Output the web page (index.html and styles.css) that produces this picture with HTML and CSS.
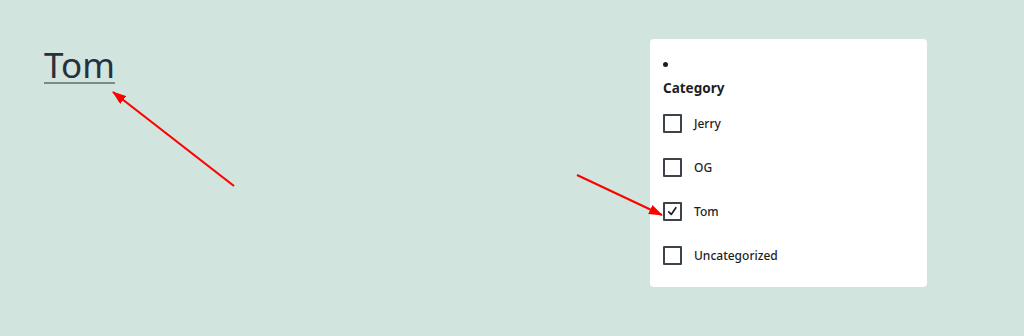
FILE: index.html
```html
<!DOCTYPE html>
<html>
<head>
<meta charset="utf-8">
<link rel="stylesheet" href="styles.css">
</head>
<body>
<div class="page">
  <div class="main">
    <a class="title" href="#">Tom</a>
  </div>
  <aside class="panel">
    <ul class="bullets"><li></li></ul>
    <h3 class="heading">Category</h3>
    <ul class="cats">
      <li class="cat"><span class="box"></span><span class="label">Jerry</span></li>
      <li class="cat"><span class="box"></span><span class="label">OG</span></li>
      <li class="cat"><span class="box checked"><svg viewBox="0 0 18 18" width="18" height="18"><path d="M4.5 9.5 L7.5 12.5 L13 4.5" fill="none" stroke="#1e1e1e" stroke-width="2" stroke-linecap="round" stroke-linejoin="round"/></svg></span><span class="label">Tom</span></li>
      <li class="cat"><span class="box"></span><span class="label">Uncategorized</span></li>
    </ul>
  </aside>
</div>
<svg class="arrows" width="1024" height="336" viewBox="0 0 1024 336">
  <defs>
    <marker id="head2" markerWidth="14" markerHeight="10" refX="13" refY="5" orient="auto" markerUnits="userSpaceOnUse">
      <path d="M0 0 L14 5 L0 10 Z" fill="#ff0000"/>
    </marker>
  </defs>
  <line x1="234" y1="186" x2="113" y2="92" stroke="#ff0000" stroke-width="2.2" marker-end="url(#head2)"/>
  <line x1="577" y1="175" x2="662" y2="215" stroke="#ff0000" stroke-width="2.2" marker-end="url(#head2)"/>
</svg>
</body>
</html>
```

FILE: styles.css
```css
html, body {
  margin: 0;
  padding: 0;
}
body {
  background: #d1e4de;
  width: 1024px;
  height: 336px;
  overflow: hidden;
  position: relative;
  font-family: "Noto Sans", "Open Sans", sans-serif;
  color: #2c3338;
}
.page {
  display: flex;
  justify-content: space-between;
  align-items: flex-start;
  padding: 39px 97px 0 44px;
}
.main {
  padding-top: 3px;
}
.title {
  font-family: "Noto Sans", sans-serif;
  font-weight: 380;
  font-size: 35px;
  line-height: 46px;
  color: #28303d;
  text-decoration: underline;
  text-decoration-color: #7d8a8c;
  text-decoration-thickness: 2px;
  text-underline-offset: 4px;
}
.panel {
  width: 277px;
  height: 248px;
  box-sizing: border-box;
  background: #ffffff;
  border-radius: 4px;
  padding: 14px 13px 0 13px;
}
.bullets {
  margin: 0;
  padding: 0;
  list-style: none;
  height: 14px;
}
.bullets li::before {
  content: "";
  display: block;
  width: 5px;
  height: 5px;
  border-radius: 50%;
  background: #1e1e1e;
  margin: 9px 0 0 0;
}
.heading {
  margin: 3px 0 0 0;
  font-size: 13.5px;
  font-weight: 700;
  line-height: 18px;
  color: #1e1e1e;
}
.cats {
  list-style: none;
  margin: 17px 0 0 0;
  padding: 0;
  display: flex;
  flex-direction: column;
  gap: 26px;
}
.cat {
  display: flex;
  align-items: center;
  gap: 12px;
  height: 18px;
}
.box {
  width: 19px;
  height: 19px;
  box-sizing: border-box;
  border: 2px solid #3c434a;
  border-radius: 1px;
  display: flex;
  align-items: center;
  justify-content: center;
  flex: none;
}
.box svg {
  width: 15px;
  height: 15px;
}
.label {
  font-size: 12px;
  font-weight: 500;
  color: #1e1e1e;
}
.arrows {
  position: absolute;
  left: 0;
  top: 0;
  pointer-events: none;
}
```
